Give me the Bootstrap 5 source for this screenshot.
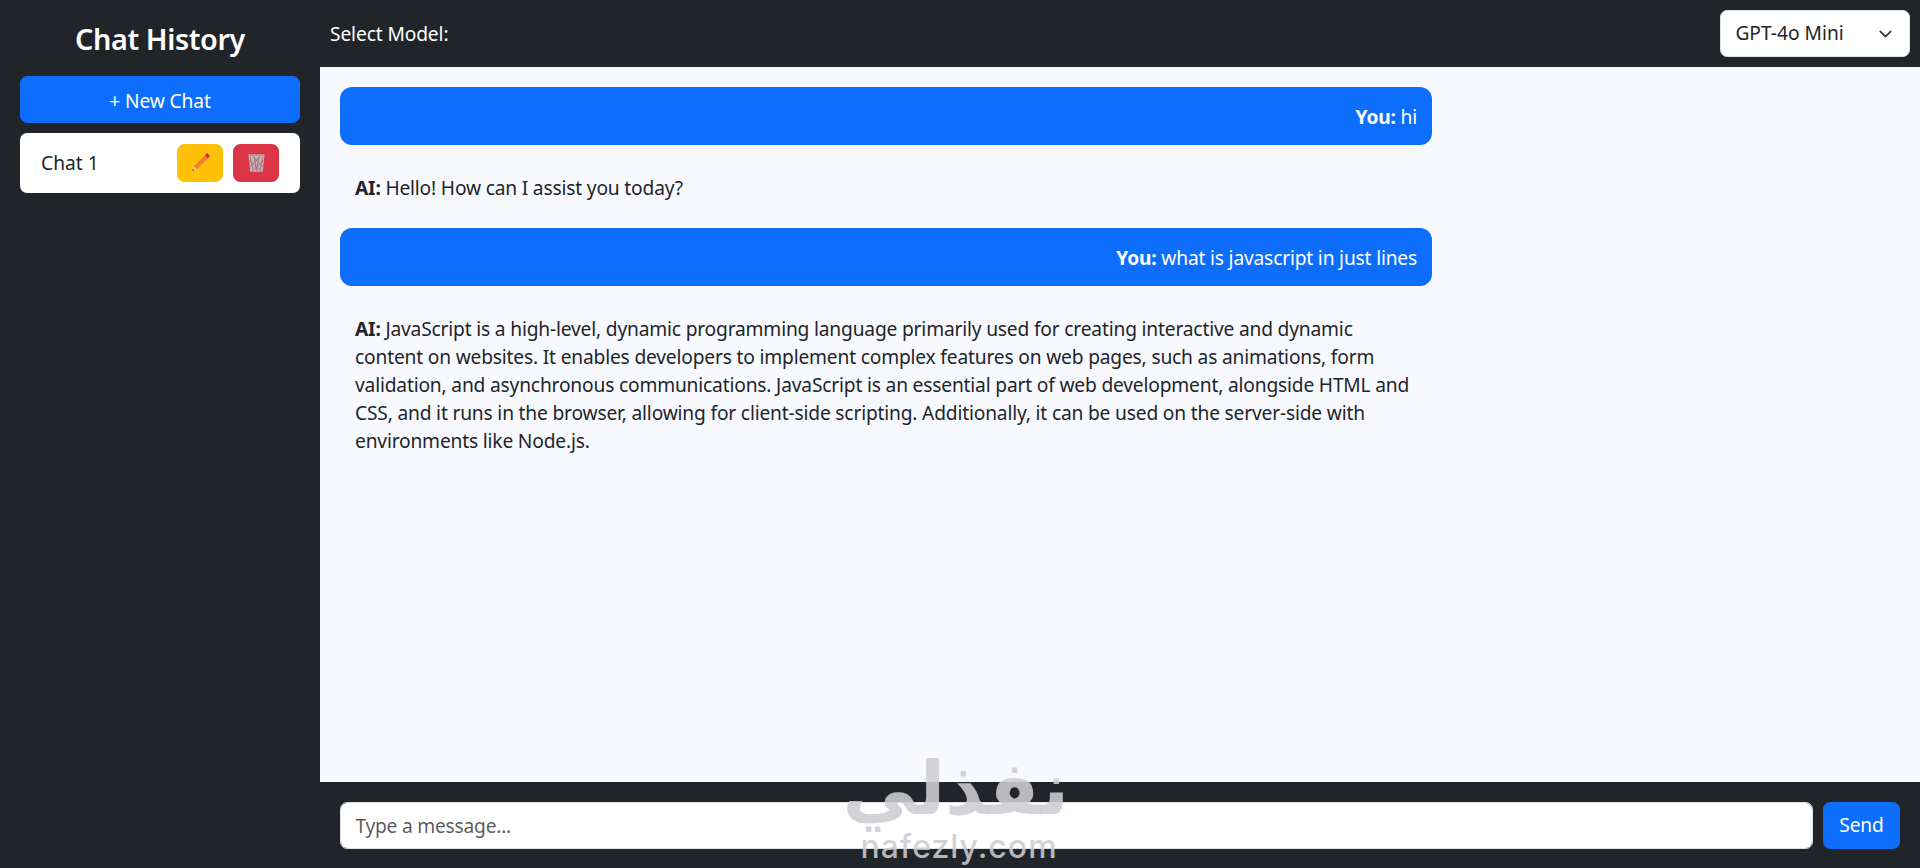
<!DOCTYPE html>
<html lang="en">
<head>
  <meta charset="UTF-8" />
  <meta name="viewport" content="width=device-width, initial-scale=1" />
  <title>Chat</title>
  <link href="https://cdn.jsdelivr.net/npm/bootstrap@5.3.0/dist/css/bootstrap.min.css" rel="stylesheet" />
  <style>
    html { font-size: 19.2px; }
    body { font-family: "Noto Sans", "Open Sans", sans-serif; height: 868px; overflow: hidden; }
    .chat-app { height: 868px; position: relative; }
    .side-panel { width: 320px; flex-shrink: 0; padding: 19px 20px; }
    .side-title { font-size: 28.8px; font-weight: 600; line-height: 1.2; margin: 0 0 19px; padding-top: 3px; letter-spacing: -.4px; }
    .new-btn { height: 47px; padding-top: 10px; padding-bottom: 5px; }
    .side-panel .btn, .top-bar, .chat-foot .btn { letter-spacing: -.12px; }
    .chat-row { height: 60px; margin-top: 10px; padding: 2px 21px 0; }
    .chat-tools { margin-top: -2px; }
    .mini-btn { width: 46px; height: 38px; padding: 0; }
    .top-bar { height: 67px; padding: 2px 10px 0; }
    .model-pick { width: 190px; height: 47px; margin-top: -2px; background-size: 19px 14px; background-position: right 14px center; }
    .chat-body { background: #f8f9ff; padding: 20px; }
    .chat-msg { width: 1092px; padding: 16px 15px 14px; margin-bottom: 12.500px; line-height: 28px; border-radius: 12px; letter-spacing: -.18px; }
    .chat-foot { height: 86px; padding: 0 20px; gap: 10px; }
    .chat-foot input { height: 47px; letter-spacing: -.22px; padding-top: 9px; }
    .send-btn { width: 77px; height: 47px; padding: 1px 0 0; }
    .stamp { position: absolute; left: 849px; top: 746px; width: 220px; color: rgba(205, 205, 210, .88); text-align: center; pointer-events: none; }
    .stamp-ar { font-family: "DejaVu Sans", sans-serif; font-size: 74px; font-weight: 700; line-height: 84px; }
    .stamp-en { font-family: "Inter", sans-serif; font-size: 32px; font-weight: 500; line-height: 34px; letter-spacing: 1px; }
  </style>
</head>
<body class="bg-dark">
  <div class="chat-app d-flex">
    <aside class="side-panel text-white">
      <h4 class="side-title text-center">Chat History</h4>
      <button class="btn btn-primary w-100 new-btn">+ New Chat</button>
      <div class="chat-row bg-white text-dark rounded d-flex align-items-center justify-content-between">
        <span>Chat 1</span>
        <div class="chat-tools d-flex gap-2">
          <button class="btn btn-warning mini-btn d-flex align-items-center justify-content-center">
            <svg width="23" height="23" viewBox="0 0 20 20">
              <path d="M4 13.500 13.600 3.900l2.600 2.600-9.600 9.600z" fill="#f4812a" />
              <path d="M13.600 3.900l1.500-1.500a1 1 0 0 1 1.400 0l1.200 1.200a1 1 0 0 1 0 1.400l-1.500 1.500z" fill="#dd2e44" />
              <path d="M4 13.500 6.600 16.100 2.800 17.400z" fill="#f5d5a0" />
              <path d="M2.800 17.400l.6-1.900 1.300 1.300z" fill="#444" />
            </svg>
          </button>
          <button class="btn btn-danger mini-btn d-flex align-items-center justify-content-center">
            <svg width="23" height="23" viewBox="0 0 20 20">
              <path d="M3 3h14l-1.600 15H4.600z" fill="#c4b4b8" />
              <path d="M4.500 5l2.500 12M8 5l2 12M12 5l-2 12M15.500 5L13 17M4 8l9 9M7 5l9 9M16 8l-9 9M13 5l-9 9" stroke="#a8636f" stroke-width=".7" fill="none" />
              <path d="M3 3h14v1.500H3z" fill="#a9a2a5" />
            </svg>
          </button>
        </div>
      </div>
    </aside>

    <main class="flex-grow-1 d-flex flex-column">
      <div class="top-bar text-white d-flex align-items-center justify-content-between">
        <span>Select Model:</span>
        <select class="form-select model-pick">
          <option>GPT-4o Mini</option>
        </select>
      </div>

      <div class="chat-body flex-grow-1">
        <div class="chat-msg text-bg-primary text-end"><strong>You:</strong> hi</div>
        <div class="chat-msg"><strong>AI:</strong> Hello! How can I assist you today?</div>
        <div class="chat-msg text-bg-primary text-end"><strong>You:</strong> what is javascript in just lines</div>
        <div class="chat-msg"><strong>AI:</strong> JavaScript is a high-level, dynamic programming language primarily used for creating interactive and dynamic content on websites. It enables developers to implement complex features on web pages, such as animations, form validation, and asynchronous communications. JavaScript is an essential part of web development, alongside HTML and CSS, and it runs in the browser, allowing for client-side scripting. Additionally, it can be used on the server-side with environments like Node.js.</div>
      </div>

      <div class="chat-foot d-flex align-items-center">
        <input type="text" class="form-control flex-grow-1" placeholder="Type a message..." />
        <button class="btn btn-primary send-btn flex-shrink-0">Send</button>
      </div>
    </main>

    <div class="stamp">
      <div class="stamp-ar" dir="rtl" lang="ar">نفذلي</div>
      <div class="stamp-en">nafezly.com</div>
    </div>
  </div>
  <script src="https://cdn.jsdelivr.net/npm/bootstrap@5.3.0/dist/js/bootstrap.bundle.min.js"></script>
</body>
</html>
